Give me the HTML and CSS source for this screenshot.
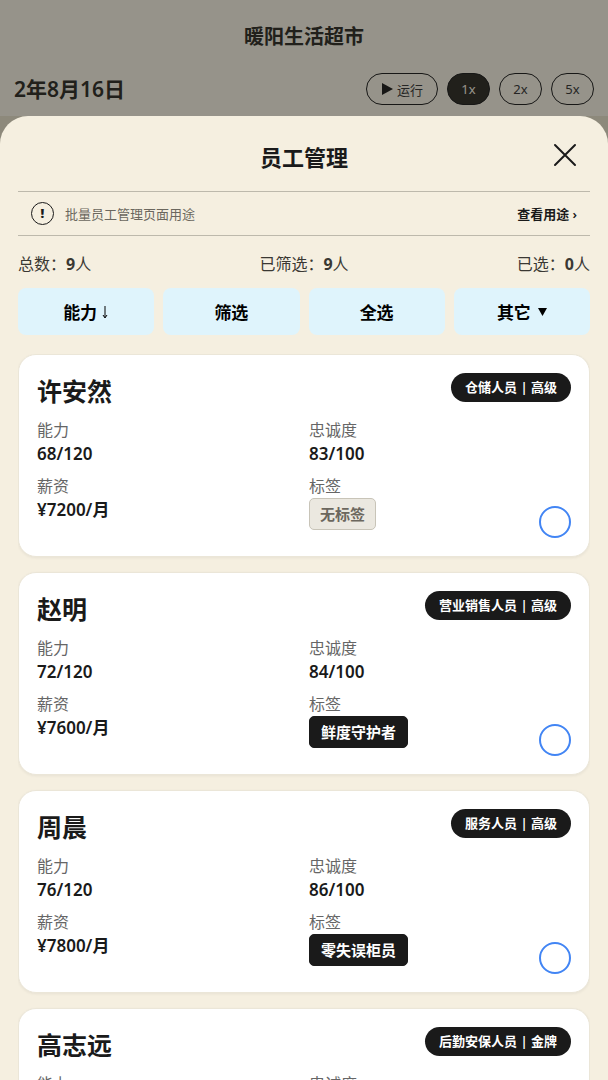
FILE: index.html
```
<!DOCTYPE html>
<html lang="zh-CN">
<head>
    <meta charset="UTF-8">
    <meta name="viewport" content="width=device-width, initial-scale=1.0">
    <title>暖阳生活超市</title>
    <link rel="stylesheet" href="styles.css">
</head>
<body>
    <header class="top-bar">
        <h1 class="store-name">暖阳生活超市</h1>
        <div class="time-row">
            <div class="date">2年8月16日</div>
            <div class="speed-controls">
                <button type="button" class="speed-btn run-btn">
                    <svg width="12" height="12" viewBox="0 0 12 12"><path d="M1 0l11 6-11 6z" fill="#1a1a1a"/></svg>
                    运行
                </button>
                <button type="button" class="speed-btn active">1x</button>
                <button type="button" class="speed-btn">2x</button>
                <button type="button" class="speed-btn">5x</button>
            </div>
        </div>
    </header>

    <div class="overlay"></div>

    <section class="sheet">
        <div class="sheet-header">
            <h2 class="sheet-title">员工管理</h2>
            <button type="button" class="close-btn" aria-label="关闭">
                <svg width="24" height="24" viewBox="0 0 24 24"><path d="M2 2l20 20M22 2L2 22" fill="none" stroke="currentColor" stroke-width="2" stroke-linecap="round"/></svg>
            </button>
        </div>

        <div class="notice">
            <span class="notice-icon">!</span>
            <span class="notice-text">批量员工管理页面用途</span>
            <a href="#" class="notice-link">查看用途 ›</a>
        </div>

        <div class="stats">
            <span>总数：<b>9</b>人</span>
            <span>已筛选：<b>9</b>人</span>
            <span>已选：<b>0</b>人</span>
        </div>

        <div class="actions">
            <button type="button" class="action-btn">能力
                <svg width="8" height="14" viewBox="0 0 8 14"><path d="M4 1v11M2 10l2 3 2-3" fill="none" stroke="currentColor"/></svg>
            </button>
            <button type="button" class="action-btn">筛选</button>
            <button type="button" class="action-btn">全选</button>
            <button type="button" class="action-btn more-btn">其它
                <svg width="9" height="9" viewBox="0 0 9 9"><path d="M0 1h9L4.500 9z" fill="currentColor"/></svg>
            </button>
        </div>

        <div class="employee-list">
            <article class="card">
                <div class="card-head">
                    <h3 class="name">许安然</h3>
                    <span class="role">仓储人员 | 高级</span>
                </div>
                <div class="info">
                    <dl class="field"><dt>能力</dt><dd>68/120</dd></dl>
                    <dl class="field"><dt>忠诚度</dt><dd>83/100</dd></dl>
                    <dl class="field"><dt>薪资</dt><dd>¥7200/月</dd></dl>
                    <dl class="field tag-field"><dt>标签</dt><dd><span class="tag empty">无标签</span></dd></dl>
                    <input type="checkbox" class="select" aria-label="选择许安然">
                </div>
            </article>

            <article class="card">
                <div class="card-head">
                    <h3 class="name">赵明</h3>
                    <span class="role">营业销售人员 | 高级</span>
                </div>
                <div class="info">
                    <dl class="field"><dt>能力</dt><dd>72/120</dd></dl>
                    <dl class="field"><dt>忠诚度</dt><dd>84/100</dd></dl>
                    <dl class="field"><dt>薪资</dt><dd>¥7600/月</dd></dl>
                    <dl class="field tag-field"><dt>标签</dt><dd><span class="tag">鲜度守护者</span></dd></dl>
                    <input type="checkbox" class="select" aria-label="选择赵明">
                </div>
            </article>

            <article class="card">
                <div class="card-head">
                    <h3 class="name">周晨</h3>
                    <span class="role">服务人员 | 高级</span>
                </div>
                <div class="info">
                    <dl class="field"><dt>能力</dt><dd>76/120</dd></dl>
                    <dl class="field"><dt>忠诚度</dt><dd>86/100</dd></dl>
                    <dl class="field"><dt>薪资</dt><dd>¥7800/月</dd></dl>
                    <dl class="field tag-field"><dt>标签</dt><dd><span class="tag">零失误柜员</span></dd></dl>
                    <input type="checkbox" class="select" aria-label="选择周晨">
                </div>
            </article>

            <article class="card">
                <div class="card-head">
                    <h3 class="name">高志远</h3>
                    <span class="role">后勤安保人员 | 金牌</span>
                </div>
                <div class="info">
                    <dl class="field"><dt>能力</dt></dl>
                    <dl class="field"><dt>忠诚度</dt></dl>
                </div>
            </article>
        </div>
    </section>
</body>
</html>
```
FILE: styles.css
```
* {
    box-sizing: border-box;
}
body {
    margin: 0;
    height: 100vh;
    overflow: hidden;
    display: flex;
    flex-direction: column;
    font-family: "Noto Sans", "Noto Sans CJK SC", sans-serif;
    background-color: #e5dfc8;
    color: #1a1a1a;
}
h1, h2, h3, dl, dd {
    margin: 0;
}
button {
    font-family: inherit;
    cursor: pointer;
}
svg {
    display: block;
}

/* top bar */
.top-bar {
    background-color: #f5f0e2;
    padding: 21px 14px 11px;
}
.store-name {
    font-size: 20px;
    line-height: 32px;
    font-weight: 600;
    text-align: center;
    margin-bottom: 20px;
}
.time-row {
    display: flex;
    justify-content: space-between;
    align-items: center;
}
.date {
    font-size: 21px;
    line-height: 32px;
    font-weight: 600;
}
.store-name, .date {
    color: #2b2a24;
}
.speed-controls {
    display: flex;
    gap: 9px;
}
.speed-btn {
    display: flex;
    align-items: center;
    justify-content: center;
    gap: 4px;
    min-width: 43px;
    height: 32px;
    padding: 0 12px;
    border: 1px solid #1a1a1a;
    border-radius: 16px;
    background: transparent;
    color: #333;
    font-size: 13px;
}
.run-btn {
    padding: 0 14px;
}
.speed-btn.active {
    background-color: #2b2a24;
    color: #f5efe0;
}
.overlay {
    position: fixed;
    inset: 0;
    background-color: rgba(20, 20, 16, 0.42);
}

/* bottom sheet */
.sheet {
    position: relative;
    flex: 1;
    min-height: 0;
    display: flex;
    flex-direction: column;
    padding: 0 18px;
    border-radius: 28px 28px 0 0;
    background-color: #f5efe0;
}
.sheet-header {
    display: grid;
    grid-template-columns: 1fr auto 1fr;
    align-items: center;
    padding: 23px 12px 16px;
}
.sheet-title {
    grid-column: 2;
    font-size: 22px;
    line-height: 36px;
    font-weight: 600;
}
.close-btn {
    justify-self: end;
    align-self: start;
    padding: 4px 1px;
    border: none;
    background: none;
    color: #1a1a1a;
}
.notice {
    display: flex;
    align-items: center;
    height: 45px;
    padding: 0 13px;
    border-top: 1px solid #bdb9ac;
    border-bottom: 1px solid #bdb9ac;
    font-size: 13px;
}
.notice-icon {
    width: 23px;
    height: 23px;
    border: 1px solid #1a1a1a;
    border-radius: 50%;
    text-align: center;
    line-height: 21px;
    font-weight: 900;
}
.notice-text {
    flex: 1;
    margin-left: 11px;
    color: #6b675e;
}
.notice-link {
    color: #1a1a1a;
    font-weight: 600;
    text-decoration: none;
}
.stats {
    display: flex;
    justify-content: space-between;
    padding: 16px 0 12px;
    font-size: 16px;
    line-height: 24px;
    color: #3a3833;
}
.actions {
    display: grid;
    grid-template-columns: repeat(4, 1fr);
    gap: 9px;
}
.action-btn {
    display: flex;
    align-items: center;
    justify-content: center;
    gap: 4px;
    height: 47px;
    border: none;
    border-radius: 8px;
    background-color: #dff4fc;
    color: #000;
    font-size: 17px;
    font-weight: 700;
}
.more-btn {
    gap: 7px;
}

/* employees */
.employee-list {
    flex: 1;
    min-height: 0;
    margin-top: 19px;
    overflow-y: auto;
    scrollbar-width: none;
}
.card {
    margin-bottom: 15px;
    padding: 18px;
    border: 1px solid #ebe6d8;
    border-radius: 18px;
    background-color: #fff;
    box-shadow: 0 1px 3px rgba(0, 0, 0, 0.06);
}
.card-head {
    display: flex;
    justify-content: space-between;
    align-items: flex-start;
    margin-bottom: 9px;
}
.name {
    font-size: 25px;
    line-height: 36px;
    font-weight: 700;
}
.role {
    padding: 0 14px;
    border-radius: 15px;
    background-color: #1a1a1a;
    color: #fff;
    font-size: 13px;
    line-height: 29px;
    font-weight: 600;
}
.info {
    display: grid;
    grid-template-columns: 1fr 1fr;
    grid-template-rows: auto minmax(64px, auto);
    gap: 8px 10px;
}
.field {
    font-size: 16px;
    line-height: 24px;
}
.field dt {
    color: #666;
}
.field dd {
    font-size: 17px;
    font-weight: 600;
}
.tag {
    display: block;
    width: fit-content;
    padding: 0 11px;
    border: 1px solid #1a1a1a;
    border-radius: 5px;
    background-color: #1a1a1a;
    color: #fff;
    font-size: 15px;
    line-height: 30px;
    font-weight: 700;
}
.tag.empty {
    padding: 0 10px;
    border-color: #c8c4b8;
    background-color: #ebe8e0;
    color: #6b675e;
}
.tag-field, .select {
    grid-row: 2;
    grid-column: 2;
}
.select {
    appearance: none;
    justify-self: end;
    align-self: end;
    width: 32px;
    height: 32px;
    margin: 0;
    border: 2px solid #4285f4;
    border-radius: 50%;
    background-color: #fff;
    cursor: pointer;
}
.select:checked {
    background-color: #4285f4;
}
```
